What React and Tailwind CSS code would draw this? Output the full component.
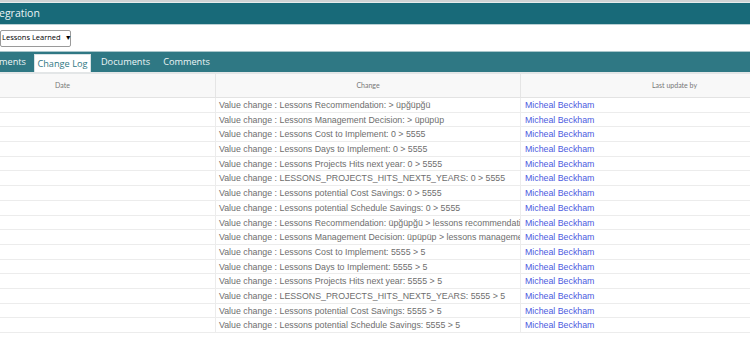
const rows = [
  'Value change : Lessons Recommendation: > üpğüpğü',
  'Value change : Lessons Management Decision: > üpüpüp',
  'Value change : Lessons Cost to Implement: 0 > 5555',
  'Value change : Lessons Days to Implement: 0 > 5555',
  'Value change : Lessons Projects Hits next year: 0 > 5555',
  'Value change : LESSONS_PROJECTS_HITS_NEXT5_YEARS: 0 > 5555',
  'Value change : Lessons potential Cost Savings: 0 > 5555',
  'Value change : Lessons potential Schedule Savings: 0 > 5555',
  'Value change : Lessons Recommendation: üpğüpğü > lessons recommendation',
  'Value change : Lessons Management Decision: üpüpüp > lessons management decision',
  'Value change : Lessons Cost to Implement: 5555 > 5',
  'Value change : Lessons Days to Implement: 5555 > 5',
  'Value change : Lessons Projects Hits next year: 5555 > 5',
  'Value change : LESSONS_PROJECTS_HITS_NEXT5_YEARS: 5555 > 5',
  'Value change : Lessons potential Cost Savings: 5555 > 5',
  'Value change : Lessons potential Schedule Savings: 5555 > 5',
];

export default function App() {
  return (
    <div className="w-[750px] h-[340px] overflow-hidden bg-white font-['Open_Sans',sans-serif]">
      <div className="h-[2px] bg-[#cfd3d4]" />
      <div className="h-[1px] bg-[#e6eced]" />
      <div className="h-[21px] bg-[#186a79] flex items-center text-[10.5px] text-[#eaf3f5]">
        <span className="-ml-[1px]">egration</span>
      </div>
      <div className="h-[1px] bg-[#b9d0d4]" />
      <div className="h-[26px] flex items-center">
        <div className="h-[17px] w-[71px] border border-[#9a9a9a] rounded-[2px] bg-white flex items-center pl-[1px] text-[7.5px] text-black whitespace-nowrap">
          Lessons Learned <span className="ml-[4px] text-[7px]">▼</span>
        </div>
      </div>
      <div className="h-[21px] bg-[#2f7884] flex items-end text-[9.2px] text-[#eef6f7] border-t border-[#a9c6cb] whitespace-nowrap">
        <span className="h-full flex items-center -ml-[1px]">ments</span>
        <span className="h-[18px] ml-[8px] w-[57px] justify-center bg-white text-[#2f7884] flex items-center border-t border-x border-[#d8e3e5]">Change Log</span>
        <span className="h-full flex items-center ml-[10px]">Documents</span>
        <span className="h-full flex items-center ml-[13px]">Comments</span>
      </div>
      <div className="h-[2px] bg-[#e3e6e7]" />
      <div className="flex h-[24px] bg-[#f8f8f8] border-b border-[#e3e3e3] text-[7px] text-[#777] font-['Lato',sans-serif]">
        <div className="w-[216px] flex items-center border-r border-[#e5e5e5] pl-[55px]">Date</div>
        <div className="w-[305px] flex items-center justify-center border-r border-[#e5e5e5]">Change</div>
        <div className="flex-1 flex items-center justify-center pl-[78px]">Last update by</div>
      </div>
      <div className="font-['Liberation_Sans',Arial,sans-serif] text-[8.8px]">
        {rows.map((r, i) => (
          <div key={i} className="flex h-[14.7px] border-b border-[#ececec]">
            <div className="w-[216px] border-r border-[#ececec]" />
            <div className="w-[305px] border-r border-[#ececec] pl-[3px] text-[#6e6e6e] whitespace-nowrap overflow-hidden leading-[14px]">{r}</div>
            <div className="flex-1 pl-[4px] text-[#4b5be0] leading-[14px]">Micheal Beckham</div>
          </div>
        ))}
      </div>
    </div>
  );
}
